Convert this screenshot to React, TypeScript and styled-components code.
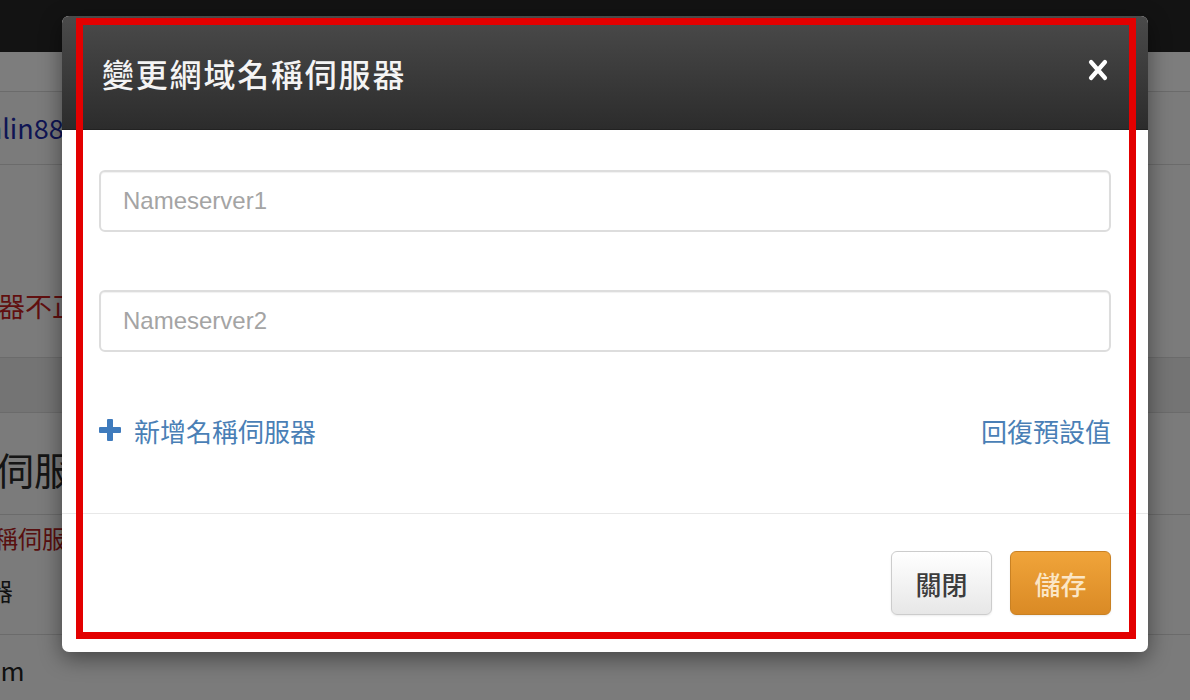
import React from "react";
import styled, { createGlobalStyle } from "styled-components";

const GlobalStyle = createGlobalStyle`
  html, body { margin: 0; padding: 0; }
  body {
    width: 1190px;
    height: 700px;
    overflow: hidden;
    font-family: "Liberation Sans", "Noto Sans CJK TC", sans-serif;
    background: #f6f6f6;
  }
  * { box-sizing: border-box; }
`;

const Stage = styled.div`
  position: relative;
  width: 1190px;
  height: 700px;
  overflow: hidden;
`;

/* ---------- page behind the dialog ---------- */
const Page = styled.div`
  display: flex;
  flex-direction: column;
  width: 100%;
  height: 100%;
  background: #f6f6f6;
`;

const NavBar = styled.div`
  height: 52px;
  background: #262626;
  flex: none;
`;

const Row = styled.div<{ $h: number; $bg?: string }>`
  flex: none;
  height: ${(p) => p.$h}px;
  background: ${(p) => p.$bg ?? "#f6f6f6"};
  border-bottom: 1px solid #d6d6d6;
  display: flex;
  flex-direction: column;
  justify-content: center;
  gap: 22px;
  padding-left: 0;
`;

const PageText = styled.span<{ $size: number; $color: string; $shift?: number }>`
  display: block;
  font-family: "Noto Sans CJK TC", "Liberation Sans", sans-serif;
  font-size: ${(p) => p.$size}px;
  line-height: 1.2;
  color: ${(p) => p.$color};
  margin-left: ${(p) => p.$shift ?? 0}px;
  white-space: nowrap;
`;

const Overlay = styled.div`
  position: absolute;
  inset: 0;
  background: rgba(0, 0, 0, 0.5);
`;

/* ---------- dialog ---------- */
const Modal = styled.div`
  position: absolute;
  left: 62px;
  top: 16px;
  width: 1086px;
  display: flex;
  flex-direction: column;
  background: #ffffff;
  border-radius: 7px;
  overflow: hidden;
  box-shadow: 0 6px 22px rgba(0, 0, 0, 0.45);
`;

const Header = styled.div`
  height: 114px;
  padding: 0 40px;
  display: flex;
  align-items: center;
  justify-content: space-between;
  background: linear-gradient(to bottom, #4a4a4a 0%, #2c2c2c 100%);
  border-bottom: 1px solid #222;
`;

const Title = styled.h3`
  margin: 0;
  font-family: "Noto Sans CJK TC", sans-serif;
  font-weight: 500;
  font-size: 32px;
  letter-spacing: 1.8px;
  color: #f4f4f4;
`;

const CloseX = styled.button`
  border: 0;
  background: transparent;
  padding: 0;
  width: 20px;
  height: 22px;
  display: flex;
  align-items: center;
  justify-content: center;
  cursor: pointer;
  margin-top: -6px;
`;

const Body = styled.div`
  padding: 40px 37px 68px;
  display: flex;
  flex-direction: column;
  gap: 58px;
  border-bottom: 1px solid #e8e8e8;
`;

const Input = styled.input`
  width: 100%;
  height: 62px;
  padding: 0 22px;
  border: 2px solid #dddddd;
  border-radius: 6px;
  box-shadow: inset 0 1px 1px rgba(0, 0, 0, 0.06);
  font-family: "Liberation Sans", Arial, sans-serif;
  font-size: 24px;
  color: #555;
  outline: none;
  &::placeholder {
    color: #a4a4a4;
  }
`;

const LinkRow = styled.div`
  height: 30px;
  margin-top: 5px;
  display: flex;
  align-items: center;
  justify-content: space-between;
`;

const Link = styled.a`
  display: flex;
  align-items: center;
  gap: 13px;
  font-family: "Noto Sans CJK TC", sans-serif;
  font-size: 26px;
  color: #4a7fb6;
  text-decoration: none;
  cursor: pointer;
`;

const Footer = styled.div`
  padding: 37px;
  display: flex;
  justify-content: flex-end;
  gap: 18px;
`;

const Btn = styled.button<{ $primary?: boolean }>`
  width: 101px;
  height: 64px;
  border-radius: 6px;
  font-family: "Noto Sans CJK TC", sans-serif;
  font-size: 26px;
  font-weight: 500;
  cursor: pointer;
  border: 1px solid ${(p) => (p.$primary ? "#c98123" : "#cccccc")};
  color: ${(p) => (p.$primary ? "#fbe6c6" : "#3c3c3c")};
  background: ${(p) =>
    p.$primary
      ? "linear-gradient(to bottom, #f0a43a 0%, #da8a25 100%)"
      : "linear-gradient(to bottom, #ffffff 0%, #e7e7e7 100%)"};
  box-shadow: 0 1px 2px rgba(0, 0, 0, 0.08);
`;

/* ---------- red annotation frame ---------- */
const Highlight = styled.div`
  position: absolute;
  left: 76px;
  top: 18px;
  width: 1060px;
  height: 621px;
  border: 7px solid #e30000;
  pointer-events: none;
`;

const PlusIcon = () => (
  <svg width="22" height="22" viewBox="0 0 22 22">
    <rect x="8" y="0" width="6" height="22" rx="1" fill="#3f7bbd" />
    <rect x="0" y="8" width="22" height="6" rx="1" fill="#3f7bbd" />
  </svg>
);

const XIcon = () => (
  <svg width="20" height="22" viewBox="0 0 20 22">
    <path d="M3 3 L17 19 M17 3 L3 19" stroke="#ffffff" strokeWidth="4.2" strokeLinecap="round" />
  </svg>
);

export default function App() {
  return (
    <>
      <GlobalStyle />
      <Stage>
        <Page>
          <NavBar />
          <Row $h={40} $bg="#fafafa" />
          <Row $h={73}>
            <PageText $size={27} $color="#1d2aa8" $shift={-13}>
              alin88.com
            </PageText>
          </Row>
          <Row $h={193}>
            <PageText $size={27} $color="#c21f1f" $shift={-2} style={{ marginTop: 90 }}>
              器不正確
            </PageText>
          </Row>
          <Row $h={55} $bg="#e9e9e9" />
          <Row $h={102}>
            <PageText $size={38} $color="#2a2a2a" $shift={-4} style={{ marginTop: 10 }}>
              伺服器
            </PageText>
          </Row>
          <Row $h={120}>
            <PageText $size={24} $color="#b02020" $shift={-30} style={{ marginTop: -20 }}>
              名稱伺服器
            </PageText>
            <PageText $size={25} $color="#222" $shift={-12}>
              器
            </PageText>
          </Row>
          <Row $h={80}>
            <PageText $size={26} $color="#222" $shift={-28} style={{ marginTop: -10 }}>
              com
            </PageText>
          </Row>
        </Page>
        <Overlay />
        <Modal role="dialog">
          <Header>
            <Title>變更網域名稱伺服器</Title>
            <CloseX aria-label="關閉">
              <XIcon />
            </CloseX>
          </Header>
          <Body>
            <Input placeholder="Nameserver1" />
            <Input placeholder="Nameserver2" />
            <LinkRow>
              <Link>
                <PlusIcon />
                新增名稱伺服器
              </Link>
              <Link>回復預設值</Link>
            </LinkRow>
          </Body>
          <Footer>
            <Btn>關閉</Btn>
            <Btn $primary>儲存</Btn>
          </Footer>
        </Modal>
        <Highlight />
      </Stage>
    </>
  );
}
